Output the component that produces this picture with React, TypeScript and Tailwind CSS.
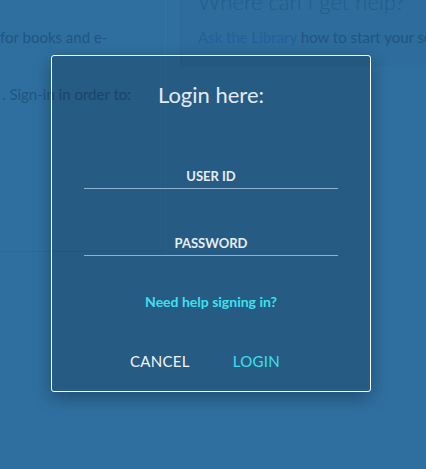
import React from "react";

export default function App() {
  return (
    <div
      className="relative w-[426px] h-[469px] overflow-hidden bg-[#2f6fa0]"
      style={{ fontFamily: "Lato, 'Open Sans', sans-serif" }}
    >
      {/* background page (dimmed) */}
      <div className="flex">
        <div className="w-[166px] h-[252px] border-b border-[#2c6a99] border-r border-r-[#3573a3]">
          <p className="mt-[27px] text-[15px] leading-[20px] text-[#1f5582] whitespace-nowrap">
            for books and e-
          </p>
          <p className="mt-[37px] text-[15px] leading-[20px] text-[#1f5582] whitespace-nowrap pl-[2px]">
            . Sign-in in order to:
          </p>
        </div>
        <div className="ml-[14px] flex-1 h-[67px] bg-[#2d6c9c] border-l border-[#2b6898] pl-[17px] overflow-hidden">
          <p className="-mt-[12px] text-[22px] leading-[28px] font-light text-[#245d8a] whitespace-nowrap">
            Where can I get help?
          </p>
          <p className="mt-[11px] text-[15px] leading-[20px] whitespace-nowrap">
            <span className="text-[#24609a]">Ask the Library</span>
            <span className="text-[#1f5582]"> how to start your search</span>
          </p>
        </div>
      </div>

      {/* modal */}
      <div className="absolute left-[51px] top-[55px] w-[320px] h-[337px] rounded-[3px] border border-white bg-[rgba(0,0,0,0.18)] shadow-[0_6px_18px_rgba(0,0,0,0.3)] flex flex-col items-center">
        <h2 className="mt-[25px] text-[22px] leading-[28px] text-[#e3ebf2] font-normal">
          Login here:
        </h2>
        <div className="mt-[58px] w-[254px] flex flex-col items-center border-b border-[#8fb1cb] pb-[3px]">
          <span className="text-[13px] leading-[18px] font-bold text-[#e6edf3]">USER ID</span>
        </div>
        <div className="mt-[45px] w-[254px] flex flex-col items-center border-b border-[#8fb1cb] pb-[3px]">
          <span className="text-[13px] leading-[18px] font-bold text-[#e6edf3]">PASSWORD</span>
        </div>
        <span className="mt-[37px] text-[14px] leading-[18px] font-bold text-[#3fe0ee]">
          Need help signing in?
        </span>
        <div className="mt-[40px] flex gap-[43px] items-center pr-[12px]">
          <span className="text-[15px] leading-[20px] text-[#f2f5f8] tracking-[0.3px]">CANCEL</span>
          <span className="text-[15px] leading-[20px] text-[#3fe0ee] tracking-[0.3px]">LOGIN</span>
        </div>
      </div>
    </div>
  );
}
